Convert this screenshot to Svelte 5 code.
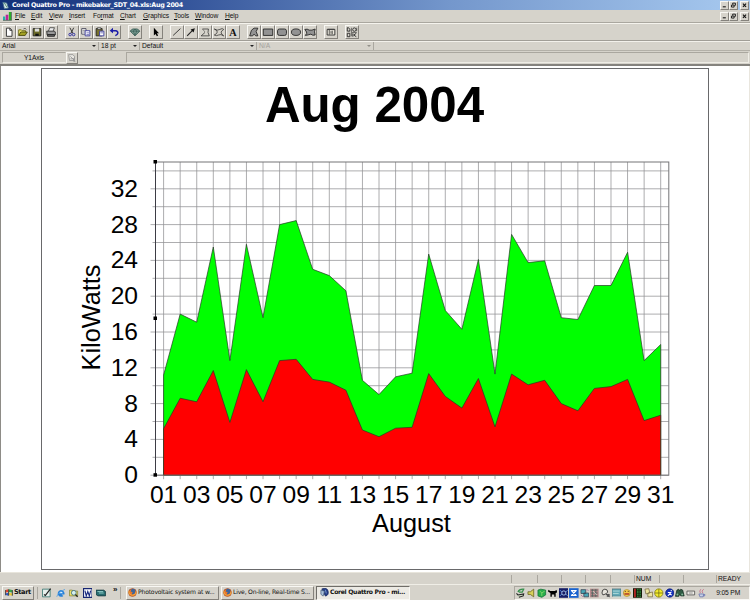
<script lang="ts">
	const menus = ['File', 'Edit', 'View', 'Insert', 'Format', 'Chart', 'Graphics', 'Tools', 'Window', 'Help'];
	const accelerators = [0, 0, 0, 0, 2, 0, 0, 0, 0, 0];

	const toolGroups = [
		['new', 'open', 'save', 'print'],
		['cut', 'copy', 'paste', 'undo'],
		['gem'],
		['pointer'],
		['line', 'arrow', 'polyline', 'freehand', 'text'],
		['polygon', 'rect', 'rounded', 'ellipse', 'blob'],
		['dialog'],
		['palette']
	];

	const quickLaunch = ['desktop', 'ie', 'search', 'word', 'terminal'];
	const tray = [
		'device', 'speaker', 'green', 'dog', 'radar', 'sync', 'network', 'grid', 'hand',
		'monitor', 'smile', 'meter', 'notes', 'norton', 'runner', 'binoculars', 'modem', 'java'
	];

	// kilowatt readings per day of the month
	const total = [
		11.2, 18, 17.1, 25.5, 12.8, 25.8, 17.6, 28, 28.45, 23, 22.3, 20.6, 10.6, 9, 11, 11.4,
		24.7, 18.4, 16.3, 24.1, 11.3, 26.9, 23.75, 23.95, 17.6, 17.4, 21.2, 21.2, 24.9, 12.8, 14.6
	];
	const lower = [
		5.2, 8.6, 8.2, 11.7, 5.9, 11.8, 8.2, 12.8, 12.95, 10.7, 10.4, 9.5, 5.05, 4.3, 5.25, 5.35,
		11.35, 8.8, 7.5, 10.8, 5.4, 11.3, 10.1, 10.6, 8, 7.2, 9.7, 9.9, 10.7, 6.1, 6.7
	];

	const plot = { left: 113.5, right: 626.8, top: 93, bottom: 406.2 };
	const x = (day: number) => 121.6 + (day - 1) * 16.57;
	const y = (value: number) => plot.bottom - value * 8.95;

	const area = (values: number[]) =>
		`M${x(1)} ${plot.bottom}` +
		values.map((v, i) => `L${x(i + 1).toFixed(1)} ${y(v).toFixed(1)}`).join('') +
		`V${plot.bottom}Z`;

	const days = total.map((_, i) => i + 1);
	const levels = Array.from({ length: 18 }, (_, i) => i * 2);
</script>

{#snippet toolIcon(name: string)}
	<svg viewBox="0 0 14 14" fill="none" stroke="#222" stroke-width="1">
		{#if name === 'new'}
			<path d="M4 2.5h4l2.5 2.5v7H4z" fill="#fff" /><path d="M8 2.5V5h2.5" />
		{:else if name === 'open'}
			<path d="M2 11V4.5h3l1 1h4V7" fill="#eee86c" stroke="#66640c" /><path d="M2 11l2.5-4H12l-2.5 4z" fill="#a4a324" stroke="#444408" /><path d="M7.5 3.5q2-2 3.5.5" stroke-width=".7" />
		{:else if name === 'save'}
			<path d="M2.5 3h9v8.5h-9z" fill="#6b6b28" /><path d="M4.5 3h5v3.5h-5z" fill="#ddd" stroke="none" /><path d="M5 9h4v2.5H5z" fill="#111" stroke="none" />
		{:else if name === 'print'}
			<path d="M4 6l1.5-4H11L9.5 6" fill="#eee" stroke-width=".8" /><path d="M2 6h9l1 1v3.5H2.5z" fill="#999" /><path d="M3 10h8v2H3z" fill="#666" />
		{:else if name === 'cut'}
			<path d="M4.5 2L8 8.5M9 2L5.8 8.5" /><circle cx="4.8" cy="10" r="1.5" stroke="#22229a" /><circle cx="8.9" cy="10" r="1.5" stroke="#22229a" />
		{:else if name === 'copy'}
			<path d="M2 3h5v6.5H2z" fill="#fff" stroke="#445" /><path d="M3 5h3M3 7h3" stroke-width=".6" /><path d="M6 5.5h5.5v6H6z" fill="#fff" stroke="#339" /><path d="M7.5 8h3M7.5 10h3" stroke="#339" stroke-width=".7" />
		{:else if name === 'paste'}
			<path d="M2.5 3h7v8.5h-7z" fill="#77702c" /><path d="M4 2h4v2H4z" fill="#ddd" stroke-width=".7" /><path d="M6.5 6h5v5.5h-5z" fill="#fff" stroke="#339" /><path d="M7.5 8h3" stroke="#339" stroke-width=".7" />
		{:else if name === 'undo'}
			<path d="M4 5.5h5q2.5.3 2.5 2.5t-3 3.2" stroke="#1c1ca8" stroke-width="1.7" /><path d="M2 5.5L5.8 2v6.5z" fill="#1c1ca8" stroke="none" />
		{:else if name === 'gem'}
			<path d="M1.5 6L4 3.5h6L12.5 6 7 11.5z" fill="#7fa096" stroke="#31554e" /><path d="M1.5 6h11M5 6l2 5 2-5-2-2.5z" stroke="#31554e" stroke-width=".8" />
		{:else if name === 'pointer'}
			<path d="M4.5 2v9l2-1.8L8 12l1.5-.8L8 8.5h2.5z" fill="#000" stroke="none" />
		{:else if name === 'line'}
			<path d="M2.5 11L11 3" />
		{:else if name === 'arrow'}
			<path d="M2.5 11.5L8.5 5.5" stroke-width="1.3" /><path d="M11.5 2.5L10 7.5 6.5 4z" fill="#111" stroke="none" />
		{:else if name === 'polyline'}
			<path d="M4 3.5h7l-.5 4 1.5 4H2.5L7 7.5" stroke-width=".8" /><path d="M4 3.5L7 7" stroke-width=".5" />
		{:else if name === 'freehand'}
			<path d="M1.5 3.5Q5 6 8 4t4.5 0Q9 6 9.5 8t3 3.5Q9 9 6.5 10.5t-5 0Q5 9 5 7T1.5 3.5" stroke-width=".8" />
		{:else if name === 'text'}
			<text x="7" y="11.5" text-anchor="middle" class="letter">A</text>
		{:else if name === 'polygon'}
			<path d="M2 11.5L4 5l3-2.5h4.5L9.5 6.5l2 5H9L7 9.5l-1.5 2z" fill="#929292" />
		{:else if name === 'rect'}
			<path d="M1.5 3.5h11v7.5h-11z" fill="#929292" />
		{:else if name === 'rounded'}
			<rect x="1.8" y="3.5" width="10.4" height="7.5" rx="2.2" fill="#929292" />
		{:else if name === 'ellipse'}
			<ellipse cx="7" cy="7.2" rx="5.3" ry="3.8" fill="#929292" />
		{:else if name === 'blob'}
			<path d="M1 4q3-1 5 .8 3 .7 7-1.3-1.5 3 0 7-3 1-5-1-3 1-6.5 1.5Q4 8.500 3 7T1 4z" fill="#929292" />
		{:else if name === 'dialog'}
			<path d="M2.5 4h9v6.500h-9z" fill="#ece9df" /><path d="M5 4v6M8.5 5.500v4M7 6v3" stroke-width=".8" /><path d="M3 4h8" stroke="#444" stroke-width="1.5" />
		{:else}
			<path d="M1.500 2v4h3V4l-1.500-2zM1.500 8.500h3v4h-3zM8 8.500v4M12 8.500l-3 2 3 2" /><circle cx="9.800" cy="4.200" r="2" /><path d="M7 7.500h5.500M6.300 2v10M12.500 2v4" stroke-width=".7" />
		{/if}
	</svg>
{/snippet}

{#snippet smallIcon(name: string)}
	<svg viewBox="0 0 10 10" fill="none" stroke="#222" stroke-width=".8">
		{#if name === 'desktop'}
			<path d="M.5 1h8v8h-8z" fill="#e7f0ec" stroke="#286c67" /><path d="M2 6.5l1.500 1 5.500-7" stroke-width="1.2" />
		{:else if name === 'ie'}
			<path d="M8.3 3.7A3.5 3.5 0 1 0 7.7 8L5.8 6.5h3A3.5 3.5 0 0 0 8.3 3.7" fill="#2681da" stroke="none" /><path d="M3.2 5.2q.4-1.5 2-1.5t1.8 1.5zM3.2 6h3" fill="#dcefff" stroke="none" /><path d="M.8 9Q2 4 9.5 1.2" stroke="#4e9de0" />
		{:else if name === 'search'}
			<path d="M.5 2h3l1 1H9v5H.5z" fill="#efe16a" stroke="#87883e" /><circle cx="5" cy="4.8" r="2.5" fill="#d7f0ef" stroke="#367" /><path d="M6.8 6.5L9 9" stroke-width="1.4" />
		{:else if name === 'word'}
			<path d="M.5.5h9v9h-9z" fill="#fff" stroke="#162672" stroke-width="1.3" /><path d="M2 2.5L3.4 8 5 3.5 6.6 8 8 2.5" stroke="#16277e" stroke-width="1.2" />
		{:else if name === 'terminal'}
			<path d="M0 2h8l2 1.5V8H2L0 6.5z" fill="#286c6f" stroke="#15373c" /><path d="M1.5 3.500h6M3 5h5" stroke="#a7e4dd" />
		{:else if name === 'device'}
			<path d="M.5 5.5L2 7l6-1-.5 2L3 9.500" stroke-width="1.100" fill="#c9d5bd" /><path d="M2 4q1.500-3.500 6-3L6.500 4H3" stroke="#38904e" stroke-width="1.3" />
		{:else if name === 'speaker'}
			<path d="M1 3.7h2.500L7 1v8L3.500 6.500H1z" fill="#d7d15c" stroke="#66621c" />
		{:else if name === 'green'}
			<path d="M1 2l3-1 5 1v5L5 9.5 1 8z" fill="#28ae4a" stroke="#157339" /><path d="M3 3l2 2 3-2M5 5v3" stroke="#96dc72" />
		{:else if name === 'dog'}
			<path d="M.5 1.5L2.3 3H7l2-1 .6 2.3L8 5v4H6.500V6.500H4V9H2.500V5L0 3.500z" fill="#000" stroke="none" />
		{:else if name === 'radar'}
			<path d="M0 0h10v10H0z" fill="#151d65" stroke="none" /><circle cx="5" cy="5" r="2.2" stroke="#cce5ff" /><path d="M1 2l2 2M9 2L7 4M1 8l2-2m6 2L7 6" stroke="#6bb0ff" />
		{:else if name === 'sync'}
			<path d="M0 0h10v10H0z" fill="#1962ce" stroke="none" /><path d="M2 2.500h6M2 7.500h6M3 3l4 4M7 3L3 7" stroke="#fff" stroke-width="1.3" />
		{:else if name === 'network'}
			<path d="M1 1.500h5v4H1zM4 5h5v4H4z" fill="#47a6b5" stroke="#345" /><path d="M7 1l2 2M1 7l2 2" stroke="#a45a92" />
		{:else if name === 'grid'}
			<path d="M0 .5h9v9H0z" fill="#b5888a" stroke="none" /><path d="M1 2h7M1 5h7M1 8h7M2.500 1v8M6 1v8" stroke="#4a655e" /><path d="M3 3l4 4" stroke="#e8e5d4" />
		{:else if name === 'hand'}
			<path d="M1 5q0-4 3-4t3 3L5 6 2 7zM5 6l4 3" fill="#e7e4dc" /><path d="M6 6h3v3H6z" fill="#555" stroke="none" />
		{:else if name === 'monitor'}
			<path d="M0 .8h9.500v7.500H0z" fill="#62aab7" stroke="#507079" /><path d="M1 3h7M1 5.500h6M1 9h8" stroke="#bee2df" />
		{:else if name === 'smile'}
			<circle cx="5" cy="5" r="3.6" fill="#f8c949" stroke="#ad9338" /><path d="M3.500 3v1m3-1v1" /><path d="M2.500 6h5" stroke="#b03d2a" stroke-width="1.6" />
		{:else if name === 'meter'}
			<path d="M0 0h9.500v10H0z" fill="#161b0a" stroke="none" /><path d="M2 .5v9" stroke="#be2626" stroke-width="1.8" /><path d="M5 .5v9M7.500.5v9" stroke="#287e37" stroke-width="1.5" stroke-dasharray="2 .5" />
		{:else if name === 'notes'}
			<path d="M1 1l4-.5L6 5 2 6zM4 5l5-1v5H4z" fill="#ede6a0" stroke="#786b42" />
		{:else if name === 'norton'}
			<circle cx="5" cy="5" r="4.3" fill="#f2eb2b" stroke="#7e761b" /><path d="M5 1v8M1 5h8" stroke="#655e13" stroke-width=".7" />
		{:else if name === 'runner'}
			<circle cx="5" cy="5" r="4.3" fill="#1633bc" stroke="#0d1c71" /><path d="M6.500 2v1.200M3 4.500h3L5 6l2 1M5 6L3 8" stroke="#fff" stroke-width="1.1" />
		{:else if name === 'binoculars'}
			<path d="M2 2l2-1 1 2 1-2 2 1 1.500 6H6L5 6 4 8.500H.5z" fill="#315d45" stroke="#173124" /><circle cx="2.500" cy="6.500" r="1" fill="#84b999" stroke="none" /><circle cx="7.500" cy="6.500" r="1" fill="#84b999" stroke="none" />
		{:else if name === 'modem'}
			<path d="M1 3h8v4H1z" fill="#f1efe9" stroke="#444" /><path d="M3 5h4" stroke="#777" />
		{:else if name === 'java'}
			<path d="M2 6h5l-.6 3H3zM7 6.500q2-.5 1 1.500H6.500" fill="#c5d1e6" stroke="#6671ac" /><path d="M3.500 5Q2 3 4 1M6 5Q4 3 7 1" stroke="#c36684" />
		{:else if name === 'windows'}
			<path d="M1 2l3-1v3.500L1 5z" fill="#df4530" stroke="none" /><path d="M5 1l4 1v3l-4-.5z" fill="#38a44c" stroke="none" /><path d="M1 6l3-.5V9L1 8z" fill="#3158c1" stroke="none" /><path d="M5 5.500l4 .5v3L5 8z" fill="#e8c93b" stroke="none" /><path d="M.5 2v6.500M4.500 1v8M9.200 2v7" stroke-width="1" />
		{:else if name === 'firefox'}
			<circle cx="5" cy="5" r="4.3" fill="#e8762a" stroke="#a44118" /><path d="M4 1q5-1 4 4-1 3-4 2l1.200-2.200L3 4z" fill="#3d659c" stroke="none" /><path d="M1 3q0 5 4 5t4-4" stroke="#f2a43e" stroke-width="1.2" />
		{:else}
			<path d="M2 1q6-2 7 2.500T6 9L4.500 6z" fill="#263d87" stroke="#172b60" /><path d="M1 2.500l4 1L3.500 9 1 7z" fill="#abc1da" stroke="#435c7a" /><path d="M6 2l1 4" stroke="#8fb5df" />
		{/if}
	</svg>
{/snippet}

{#snippet windowButtons()}
	<div class="window-buttons">
		<button aria-label="Minimize"><svg viewBox="0 0 8 8"><path d="M2 5.500h3.500" /></svg></button>
		<button aria-label="Restore"><svg viewBox="0 0 8 8"><path d="M3 3V1.300h3.200v2.500H5M1.700 3.500h3v2.300h-3z" stroke-width="1" /></svg></button>
		<button class="close" aria-label="Close"><svg viewBox="0 0 8 8"><path d="M2.200 1.800l3.600 3.800M5.800 1.800L2.200 5.600" /></svg></button>
	</div>
{/snippet}

<div class="screen">
	<header class="titlebar">
		<svg class="app-icon" viewBox="0 0 10 10">
			<path d="M1 1l5 1 2 6-5 1z" fill="#dce9ec" stroke="#44718a" /><path d="M3 2l3 5" stroke="#367a55" />
		</svg>
		<span>Corel Quattro Pro - mikebaker_SDT_04.xls:Aug 2004</span>
		{@render windowButtons()}
	</header>

	<nav class="menubar">
		<svg class="chart-icon" viewBox="0 0 10 10">
			<path d="M0 5h2.500v4H0z" fill="#22b2a8" /><path d="M3 3h3v6H3z" fill="#bd249b" /><path d="M6.500 0H9v9H6.500z" fill="#2bae29" /><path d="M0 9.300h9.500V0" fill="none" stroke="#264438" stroke-width=".7" />
		</svg>
		{#each menus as menu, i}
			<span>{menu.slice(0, accelerators[i])}<u>{menu[accelerators[i]]}</u>{menu.slice(accelerators[i] + 1)}</span>
		{/each}
		{@render windowButtons()}
	</nav>

	<div class="toolbar">
		{#each toolGroups as group}
			<div class="group">
				{#each group as tool}
					<button class="tool" aria-label={tool}>{@render toolIcon(tool)}</button>
				{/each}
			</div>
		{/each}
	</div>

	<div class="properties">
		<div class="select">Arial<i></i></div>
		<div class="select">18 pt<i></i></div>
		<div class="select">Default<i></i></div>
		<div class="select disabled">N/A<i></i></div>
	</div>

	<div class="input-line">
		<div class="cell-name">Y1Axis</div>
		<button class="navigate" aria-label="Navigate">
			<svg viewBox="0 0 12 12" fill="none" stroke="#929292">
				<path d="M2 2h5l2 2v5H3z" fill="#e9e7e1" /><path d="M4 4l5 5M4 7h3M8 6v4h2" />
			</svg>
		</button>
		<div class="input"></div>
	</div>

	<main>
		<div class="sheet">
			<svg class="chart" viewBox="0 0 666 500">
				<text x="332.500" y="53" class="heading" text-anchor="middle">Aug 2004</text>

				<g class="grid">
					{#each levels as level}
						<line x1={level % 4 ? plot.left - 3 : plot.left - 5} x2={plot.right} y1={y(level)} y2={y(level)} />
					{/each}
					{#each days as day}
						<line x1={x(day)} x2={x(day)} y1={plot.top} y2={plot.bottom + 4} />
					{/each}
				</g>

				<path class="area" d={area(total)} fill="#00ff00" />
				<path class="area" d={area(lower)} fill="#ff0000" />

				<rect
					class="frame"
					x={plot.left}
					y={plot.top}
					width={plot.right - plot.left}
					height={plot.bottom - plot.top}
				/>
				<line class="axis" x1={plot.left} x2={plot.left} y1={plot.top} y2={plot.bottom} />
				{#each [plot.top, 249.500, plot.bottom] as handle}
					<rect x={plot.left - 2} y={handle - 2} width="3.500" height="3.500" />
				{/each}

				{#each levels.filter((level) => level % 4 === 0) as level}
					<text x="96" y={y(level) + 8} text-anchor="end">{level}</text>
				{/each}
				{#each days.filter((day) => day % 2) as day}
					<text x={x(day)} y="433.500" text-anchor="middle">{String(day).padStart(2, '0')}</text>
				{/each}
				<text x="369.500" y="462.500" class="axis-title" text-anchor="middle">August</text>
				<text class="axis-title" transform="translate(57.500 248.500) rotate(-90)" text-anchor="middle">KiloWatts</text>
			</svg>
		</div>
	</main>

	<div class="statusbar">
		<span></span><span></span><span></span><span></span><span></span><span>NUM</span><span></span><span></span><span>READY</span>
	</div>

	<footer class="taskbar">
		<button class="start">{@render smallIcon('windows')}Start</button>
		<div class="quick">
			{#each quickLaunch as name}
				{@render smallIcon(name)}
			{/each}
			<b>»</b>
		</div>
		<div class="tasks">
			<button>{@render smallIcon('firefox')}<span>Photovoltaic system at w...</span></button>
			<button>{@render smallIcon('firefox')}<span>Live, On-line, Real-time S...</span></button>
			<button class="active">{@render smallIcon('quattro')}<span>Corel Quattro Pro - mi...</span></button>
		</div>
		<div class="tray">
			{#each tray as name}
				{@render smallIcon(name)}
			{/each}
			<time>9:05 PM</time>
		</div>
	</footer>
</div>

<style>
	:global(body) {
		margin: 0;
		overflow: hidden;
	}

	.screen {
		display: flex;
		flex-direction: column;
		width: 750px;
		height: 600px;
		background: #d6d3cb;
		color: #111;
		font-family: 'Liberation Sans', Arial, sans-serif;
		font-size: 6.7px;
		line-height: 1;
		white-space: nowrap;
	}

	button {
		box-sizing: border-box;
		flex: none;
		margin: 0;
		padding: 0;
		border: 1px solid;
		border-color: #f8f7f3 #85827c #85827c #f8f7f3;
		background: #d6d3cb;
		color: inherit;
		font: inherit;
	}

	svg {
		display: block;
		flex: none;
	}

	.titlebar {
		display: flex;
		align-items: center;
		box-sizing: border-box;
		flex: none;
		height: 10px;
		padding-left: 2px;
		background: linear-gradient(90deg, #123078, #2c4c94 20%, #7497cc 60%, #a8caf0);
		color: #fff;
		font-family: 'DejaVu Sans', sans-serif;
		font-size: 6.4px;
		font-weight: bold;
		letter-spacing: -0.33px;
	}

	.app-icon {
		width: 8px;
		height: 9px;
		margin-right: 2px;
	}

	.window-buttons {
		display: flex;
		margin-left: auto;
		padding-right: 1px;
	}

	.window-buttons button {
		width: 9px;
		height: 9px;
	}

	.window-buttons .close {
		margin-left: 2px;
	}

	.window-buttons svg {
		width: 7px;
		height: 7px;
		fill: none;
		stroke: #111;
		stroke-width: 1.2;
	}

	.menubar {
		display: grid;
		grid-template-columns: 12px 16px 18px 20px 24px 27px 23px 31px 21px 30px 20px 1fr;
		align-items: center;
		box-sizing: border-box;
		flex: none;
		height: 13px;
		padding-left: 3px;
		border-bottom: 1px solid #aaa79f;
		letter-spacing: -0.1px;
	}

	.menubar u {
		text-decoration-thickness: 0.5px;
		text-underline-offset: 0.5px;
	}

	.chart-icon {
		width: 9px;
		height: 9px;
	}

	.toolbar {
		display: flex;
		align-items: center;
		gap: 7px;
		box-sizing: border-box;
		flex: none;
		height: 18px;
		padding-left: 2px;
		border-top: 1px solid #f5f3ed;
		border-bottom: 1px solid #a19e97;
	}

	.group {
		display: flex;
	}

	.tool {
		width: 14px;
		height: 14px;
	}

	.tool svg {
		width: 12px;
		height: 12px;
	}

	.letter {
		fill: #111;
		stroke: none;
		font: bold 12px 'Liberation Serif', serif;
	}

	.properties {
		display: grid;
		grid-template-columns: 99px 41px 117px 117px;
		box-sizing: border-box;
		flex: none;
		height: 9px;
		border-top: 1px solid #f3f1eb;
	}

	.select {
		display: flex;
		align-items: center;
		justify-content: space-between;
		padding: 0 2px;
		border-right: 1px solid #aaa79f;
	}

	.select i {
		border: 2px solid transparent;
		border-top: 2.5px solid #222;
		border-bottom: 0;
	}

	.disabled {
		color: #a4a29c;
	}

	.disabled i {
		border-top-color: #929089;
	}

	.input-line {
		display: flex;
		box-sizing: border-box;
		flex: none;
		height: 16px;
		padding: 1px 1px 1px 2px;
		border-top: 1px solid #b3b0a8;
		border-bottom: 2px solid #85837e;
	}

	.cell-name {
		box-sizing: border-box;
		width: 64px;
		padding: 2px 0 0 21px;
		border: 1px solid;
		border-color: #aaa79f #d6d3cb #efede6 #aaa79f;
		letter-spacing: -0.15px;
	}

	.navigate {
		width: 12px;
		height: 12px;
	}

	.navigate svg {
		width: 10px;
		height: 10px;
	}

	.input {
		flex: 1;
		margin-left: 48px;
		border: 1px solid;
		border-color: #aaa79f #efede6 #efede6 #aaa79f;
	}

	main {
		display: flex;
		box-sizing: border-box;
		flex: 1;
		padding: 2px 0 0 41px;
		border-left: 1px solid #8e8c87;
		border-right: 1px solid #e9e6de;
		background: #fff;
	}

	.sheet {
		width: 666px;
		height: 500px;
		margin-left: -1px;
		border: 1px solid #69696b;
	}

	.chart {
		width: 666px;
		height: 500px;
		overflow: visible;
		font-size: 24.6px;
		fill: #000;
	}

	.heading {
		font-size: 49.3px;
		font-weight: bold;
	}

	.axis-title {
		font-size: 25.3px;
	}

	.grid line {
		stroke: #929294;
		stroke-width: 0.75;
	}

	.area {
		stroke: #263a26;
		stroke-width: 0.7;
	}

	.frame {
		fill: none;
		stroke: #747477;
		stroke-width: 1;
	}

	.axis {
		stroke: #3d3d45;
		stroke-width: 1;
	}

	.statusbar {
		display: grid;
		grid-template-columns: 26px 24px 24px 25px 24px 25px 24px 33px 34px;
		align-items: center;
		box-sizing: border-box;
		flex: none;
		height: 12px;
		padding-left: 511px;
		border-top: 1px solid #e8e5dc;
	}

	.statusbar span {
		height: 8px;
		padding-left: 1px;
		border-left: 1px solid #aaa79f;
		line-height: 8px;
	}

	.taskbar {
		display: flex;
		align-items: center;
		box-sizing: border-box;
		flex: none;
		height: 16px;
		padding-left: 2px;
		border-top: 1px solid #f0eee7;
	}

	.taskbar button {
		display: flex;
		align-items: center;
		height: 14px;
	}

	.taskbar .start {
		width: 32px;
		padding-left: 2px;
		font-family: 'DejaVu Sans', sans-serif;
		font-size: 6.6px;
		font-weight: bold;
		letter-spacing: -0.4px;
	}

	.start :global(svg) {
		width: 8px;
		height: 9px;
		margin-right: 1px;
	}

	.quick {
		display: flex;
		align-items: center;
		gap: 4px;
		width: 84px;
		height: 12px;
		margin-left: 3px;
		padding-left: 4px;
		border-left: 1px solid #aaa79f;
		border-right: 1px solid #aaa79f;
		box-sizing: border-box;
	}

	.quick svg,
	.tray svg {
		width: 9.6px;
		height: 10px;
	}

	.quick b {
		margin: -5px 0 0 3px;
		font-size: 8px;
	}

	.tasks {
		display: flex;
		gap: 2px;
		margin-left: 5px;
	}

	.tasks button {
		width: 93px;
		padding-left: 1px;
		font-family: 'DejaVu Sans', sans-serif;
		font-size: 6.1px;
		letter-spacing: -0.2px;
	}

	.tasks svg {
		width: 9px;
		height: 9px;
		margin-right: 1px;
	}

	.tasks .active {
		width: 94px;
		padding-left: 3px;
		border-color: #6f6d68 #f8f7f3 #f8f7f3 #6f6d68;
		background: #eceae4;
		font-weight: bold;
		letter-spacing: -0.3px;
	}

	.tray {
		display: flex;
		align-items: center;
		gap: 1.04px;
		box-sizing: border-box;
		width: 236px;
		height: 14px;
		margin-left: auto;
		padding-left: 1px;
		border: 1px solid;
		border-color: #aaa79f #f8f7f3 #f8f7f3 #aaa79f;
	}

	.tray time {
		margin: 1px 0 0 9px;
		letter-spacing: -0.15px;
	}
</style>
